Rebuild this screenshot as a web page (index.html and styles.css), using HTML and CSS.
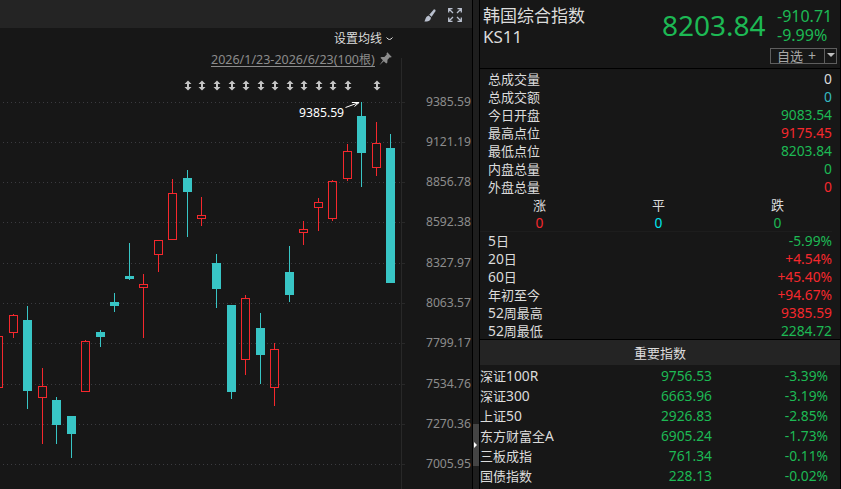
FILE: index.html
```
<!DOCTYPE html>
<html lang="zh-CN">
<head>
<meta charset="utf-8">
<title>韩国综合指数 KS11</title>
<link rel="stylesheet" href="styles.css">
</head>
<body>
<main class="app">
  <section class="chart-pane">
    <header class="toolbar">
      <svg class="brush" width="12" height="14" viewBox="0 0 12 14"><path d="M10 0.2 Q11.800 .2 11.600 2 L7.600 7.800 L5.200 5.800 Z"/><path d="M4.500 6.500 L6.900 8.500 C7 11.800 3.500 13.200 .4 12.400 C1.700 11 1 8 4.500 6.500Z"/></svg>
      <svg class="expand" width="14" height="14" viewBox="0 0 14 14"><path d="M.7 4.500V.7H4.500M9.500 .7h3.800V4.500M13.300 9.500v3.800H9.500M4.500 13.300H.7V9.500M1 1l4 4M13 1L9 5M13 13L9 9M1 13l4-4"/></svg>
    </header>
    <div class="ma-row"><span>设置均线</span><svg width="7" height="4" viewBox="0 0 7 4"><path d="M.5 .5Q3.500 4.500 6.500 .5"/></svg></div>
    <div class="range-row"><span class="range">2026/1/23-2026/6/23(100<span class="han">根</span>)</span><svg width="13" height="14" viewBox="0 0 13 14"><path d="M8.300 .3L12.800 5L11.500 5.600L10.800 5.300L8.500 7.800L8.300 10.800L7.200 11.600L4.800 9.200L.4 13.300L3.900 8.300L1.400 5.800L2.500 4.900L5.300 4.900L7.800 2.400L7.500 1.400Z"/></svg></div>
    <svg class="plot" width="472" height="421" viewBox="0 68 472 421">
      <g id="grid"></g>
      <g id="marks"></g>
      <g id="candles"></g>
      <path class="pointer" d="M345.500 107.500L359 102.500M352 102.500H359M354.500 106.500L359 102.500"/>
      <text class="peak" x="299" y="117">9385.59</text>
    </svg>
  </section>
  <div class="splitter"><div class="handle"><i></i></div></div>
  <aside class="quote">
    <header class="summary">
      <div class="name"><div>韩国综合指数</div><div>KS11</div></div>
      <div class="price">8203.84</div>
      <div class="change"><div>-910.71</div><div>-9.99%</div></div>
      <div class="watch"><span class="add">自选<b>+</b></span><span class="drop"><i></i></span></div>
    </header>
    <section class="stats">
      <div class="row"><span>总成交量</span><span class="n">0</span></div>
      <div class="row"><span>总成交额</span><span class="n amount">0</span></div>
      <div class="row"><span>今日开盘</span><span class="n down">9083.54</span></div>
      <div class="row"><span>最高点位</span><span class="n up">9175.45</span></div>
      <div class="row"><span>最低点位</span><span class="n down">8203.84</span></div>
      <div class="row"><span>内盘总量</span><span class="n down">0</span></div>
      <div class="row"><span>外盘总量</span><span class="n up">0</span></div>
      <div class="trio"><span>涨</span><span>平</span><span>跌</span></div>
      <div class="trio n"><span class="up">0</span><span class="flat">0</span><span class="down">0</span></div>
    </section>
    <section class="stats periods">
      <div class="row"><span><span class="n">5</span>日</span><span class="n down">-5.99%</span></div>
      <div class="row"><span><span class="n">20</span>日</span><span class="n up">+4.54%</span></div>
      <div class="row"><span><span class="n">60</span>日</span><span class="n up">+45.40%</span></div>
      <div class="row"><span>年初至今</span><span class="n up">+94.67%</span></div>
      <div class="row"><span><span class="n">52</span>周最高</span><span class="n up">9385.59</span></div>
      <div class="row"><span><span class="n">52</span>周最低</span><span class="n down">2284.72</span></div>
    </section>
    <h2 class="heading">重要指数</h2>
    <section class="indices">
      <div class="index"><span>深证<span class="n">100R</span></span><span class="n down">9756.53</span><span class="n down">-3.39%</span></div>
      <div class="index"><span>深证<span class="n">300</span></span><span class="n down">6663.96</span><span class="n down">-3.19%</span></div>
      <div class="index"><span>上证<span class="n">50</span></span><span class="n down">2926.83</span><span class="n down">-2.85%</span></div>
      <div class="index"><span>东方财富全<span class="n">A</span></span><span class="n down">6905.24</span><span class="n down">-1.73%</span></div>
      <div class="index"><span>三板成指</span><span class="n down">761.34</span><span class="n down">-0.11%</span></div>
      <div class="index"><span>国债指数</span><span class="n down">228.13</span><span class="n down">-0.02%</span></div>
    </section>
  </aside>
</main>
<script src="chart.js"></script>
</body>
</html>
```
FILE: styles.css
```
* { box-sizing: border-box; }
body {
  margin: 0;
  background: #171717;
  color: #dcdcdc;
  font: 13px/18px "Noto Sans", "Noto Sans CJK SC", sans-serif;
}
.app { display: flex; width: 841px; height: 489px; overflow: hidden; }
.n { font-size: 13.8px; }
.up { color: #f5282d; }
.down { color: #1db954; }
.flat { color: #00e5ee; }
.amount { color: #35b9c0; }

.chart-pane { display: flex; flex-direction: column; width: 472px; flex: none; }
.toolbar {
  display: flex; justify-content: flex-end; align-items: flex-start; gap: 12px;
  height: 28px; padding: 8px 10px 0 0; background: #242424;
}
.toolbar svg { display: block; }
.brush { fill: #b9c0ce; margin-top: 1px; }
.expand { fill: none; stroke: #b9c0ce; stroke-width: 1.3; }
.ma-row { display: flex; align-items: center; gap: 4px; height: 21px; padding-left: 334px; font-size: 12px; }
.ma-row svg { fill: none; stroke: #dcdcdc; }
.range-row { display: flex; align-items: center; gap: 4px; height: 19px; padding: 1px 0 0 211px; color: #8c8c8c; font-size: 12.5px; }
.range { line-height: 15px; height: 15px; border-bottom: 1px solid #8c8c8c; white-space: nowrap; }
.han { font-size: 12px; }
.range-row svg { fill: #8c8c8c; flex: none; }
.plot { display: block; flex: none; overflow: visible; }
.dots { stroke: #3b3b40; stroke-dasharray: 1 3; }
.axis { fill: #282828; }
.scale { fill: #8c8c8c; font-size: 12.2px; text-anchor: end; }
.mark { fill: #c4c4c4; }
.rise { fill: none; stroke: #f5282d; }
.rise-wick { fill: #f5282d; }
.fall { fill: #38c5c5; }
.pointer { fill: none; stroke: #fff; }
.peak { fill: #fff; font-size: 12.2px; }

.splitter {
  display: flex; align-items: flex-start; width: 8px; flex: none; padding-top: 424px;
  background: #1e1e1e; border: solid #000; border-width: 0 1px;
}
.handle { display: flex; align-items: center; width: 6px; height: 42px; padding-left: 1px; background: #444; }
.handle i { border: solid transparent; border-width: 3px 0 3px 3px; border-left-color: #fff; }

.quote { width: 361px; flex: none; border-right: 1px solid #000; }
.summary {
  display: grid; grid-template-columns: 182px 110px 1fr; grid-template-rows: 45px 23px;
  height: 69px; border-bottom: 1px solid #000;
}
.name { padding: 5px 0 0 3px; font-size: 17px; line-height: 21px; }
.price { padding-top: 4px; color: #1db954; font-size: 28px; line-height: 42px; }
.change { padding: 7px 0 0 5px; color: #1db954; font-size: 16px; line-height: 19px; }
.watch { grid-column: 1 / -1; justify-self: end; display: flex; margin: 3px 3px 0 0; width: 67px; height: 16px; border: 1px solid #5e5e5e; color: #a8a8a8; line-height: 14px; }
.add { flex: 1; padding-left: 6px; white-space: nowrap; }
.add b { margin-left: 5px; font-weight: 400; font-size: 14px; }
.drop { display: flex; justify-content: center; width: 12px; padding-top: 4px; border-left: 1px solid #5e5e5e; }
.drop i { height: 4px; border: solid transparent; border-width: 4px 4px 0; border-top-color: #c0c0c0; }
.stats { height: 163px; padding: 1px 8px 0; }
.row { display: flex; justify-content: space-between; height: 18px; }
.trio { display: grid; grid-template-columns: repeat(3, 119px); height: 18px; margin-left: -8px; text-align: center; }
.trio + .trio { border-bottom: 1px solid #1d1d1d; }
.periods { height: 107px; padding-top: 0; }
.heading { margin: 0; height: 26px; border-top: 1px solid #000; background: #242424; font-size: 13px; font-weight: 400; line-height: 26px; text-align: center; }
.indices { padding-top: 1px; }
.index { display: grid; grid-template-columns: 130px 102px 116px; line-height: 20px; height: 20px; }
.index > :nth-child(n+2) { text-align: right; }
```
FILE: chart.js
```
// Candle: [left, bodyTop, bodyBottom, wickTop, wickBottom, rising]
const candles = [
  [-6,336,388,336,388,1],[9,315,333,314,338,1],[23,320,391,306,409,0],[38,386,398,368,444,1],
  [52,400,425,397,444,0],[67,416,434,416,458,0],[81,341,392,340,392,1],[96,332,337,330,347,0],
  [110,302,306,293,312,0],[125,276,279,243,280,0],[139,284,288,274,338,1],[154,240,255,240,272,1],
  [168,193,240,179,240,1],[183,178,192,170,237,0],[197,215,219,197,226,1],[212,263,289,254,308,0],
  [227,305,392,305,399,0],[241,298,360,295,375,1],[256,328,355,313,384,0],[270,349,388,343,406,1],
  [285,272,295,246,302,0],[299,229,233,221,245,1],[314,202,208,198,231,1],[328,181,219,180,221,1],
  [343,151,179,144,181,1],[357,116,153,102,187,0],[372,143,168,122,176,1],[386,148,283,134,283,0]
];
const levels = [[102,"9385.59"],[142,"9121.19"],[182,"8856.78"],[222,"8592.38"],[263,"8327.97"],
  [303,"8063.57"],[343,"7799.17"],[384,"7534.76"],[424,"7270.36"],[464,"7005.95"]];

document.getElementById("grid").innerHTML =
  '<rect class="axis" x="401" y="58" width="1" height="431"/>' +
  levels.map(([y, t]) =>
    `<path class="dots" d="M3 ${y + .5}H401"/><rect class="axis" x="402" y="${y}" width="3" height="1"/>` +
    `<text class="scale" x="471" y="${y + 4}">${t}</text>`).join("");

document.getElementById("marks").innerHTML = candles.slice(13).filter((c, i) => i !== 12 && i !== 14)
  .map(c => `<path class="mark" d="M${c[0] + 5} 80.500l3.500 3.500h-2.500v3h2.500l-3.500 3.500l-3.500-3.500h2.500v-3h-2.500z"/>`).join("");

document.getElementById("candles").innerHTML = candles.map(([x, t, b, wt, wb, up]) => up
  ? `<rect class="rise-wick" x="${x + 4}" y="${wt}" width="1" height="${t - wt}"/>` +
    `<rect class="rise-wick" x="${x + 4}" y="${b}" width="1" height="${wb - b}"/>` +
    `<rect class="rise" x="${x + .5}" y="${t + .5}" width="8" height="${b - t - 1}"/>`
  : `<rect class="fall" x="${x}" y="${t}" width="9" height="${b - t}"/>` +
    `<rect class="fall" x="${x + 4}" y="${wt}" width="1" height="${wb - wt}"/>`).join("");
```
